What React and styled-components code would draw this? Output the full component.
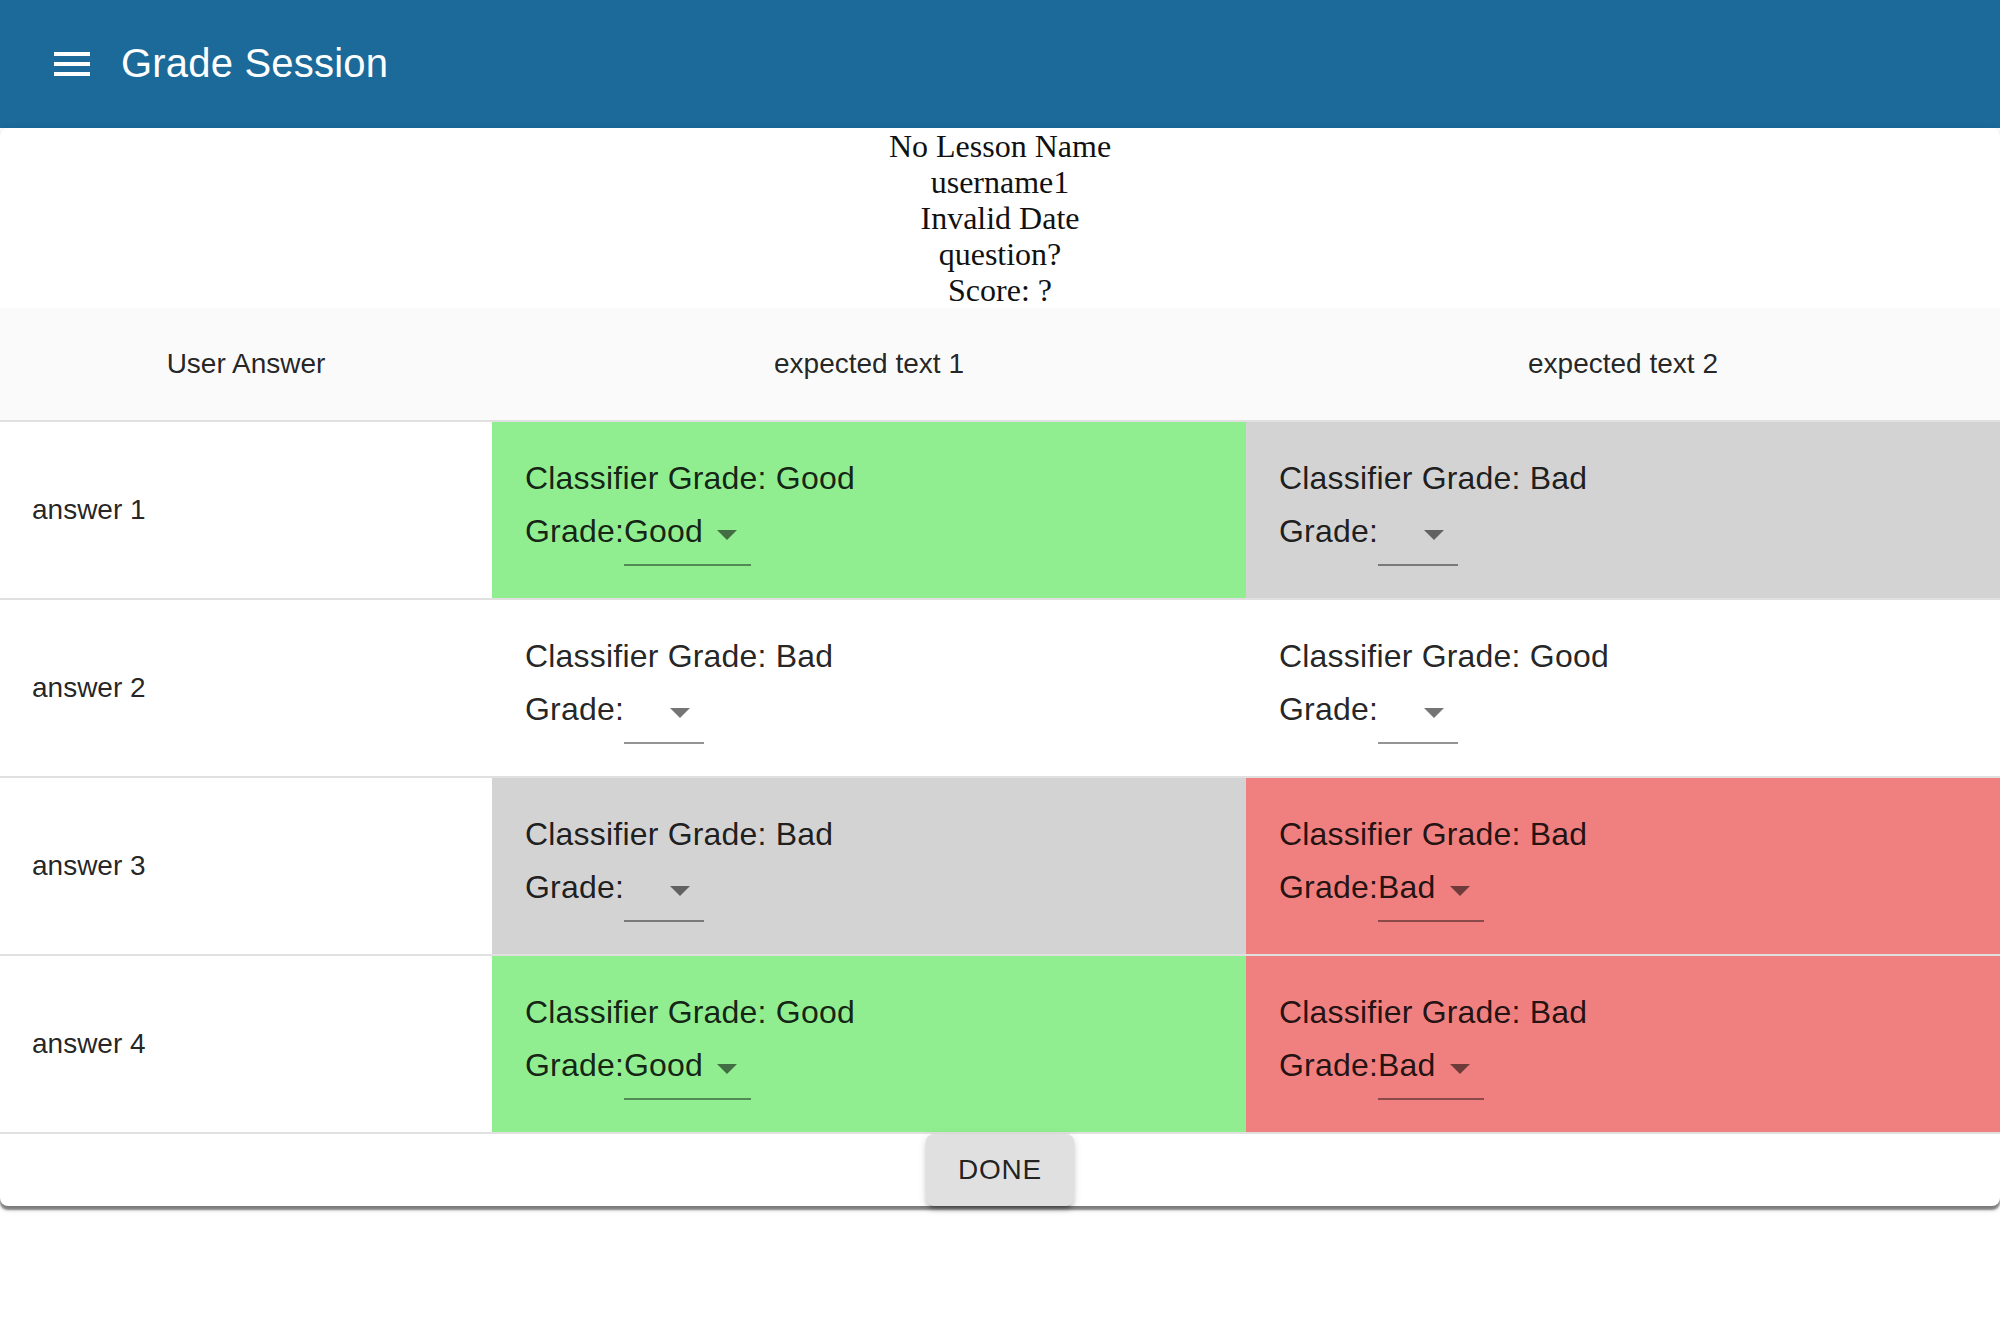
import React, { useState } from "react";
import styled, { createGlobalStyle } from "styled-components";

// global reset
const GlobalStyle = createGlobalStyle`
  body {
    margin: 0;
    background: #fff;
    font-family: "Liberation Sans", Arial, Helvetica, sans-serif;
  }
`;

const GRADE_BG = {
  Good: "#90ee90",
  Bad: "#f08080",
  none: "#d3d3d3",
  blank: "transparent",
};

// styled component
const AppBar = styled.header`
  height: 128px;
  background-color: #1b6a9a;
  color: #fff;
  display: flex;
  align-items: center;
  padding: 0 48px;
  position: relative;
  z-index: 1;
`;

const MenuButton = styled.button`
  border: none;
  background: none;
  padding: 0;
  margin-right: 25px;
  width: 48px;
  height: 48px;
  display: flex;
  color: #fff;
  cursor: pointer;

  svg {
    width: 48px;
    height: 48px;
    fill: currentColor;
  }
`;

const Title = styled.h1`
  margin: 0 0 2px;
  font-size: 40px;
  font-weight: 400;
  line-height: 1.6;
  letter-spacing: 0.2px;
`;

const Paper = styled.main`
  position: relative;
  z-index: 2;
  background: #fff;
  border-radius: 8px;
  margin-bottom: 40px;
  box-shadow: 0 4px 2px 0 rgba(0, 0, 0, 0.4), 0 3px 4px 0 rgba(0, 0, 0, 0.16),
    0 2px 8px 0 rgba(0, 0, 0, 0.12);
`;

const SessionInfo = styled.div`
  text-align: center;
  font-family: "Liberation Serif", "Times New Roman", serif;
  font-size: 32px;
  line-height: 36px;
  color: #111;
`;

const Table = styled.div`
  display: grid;
  grid-template-columns: 492px 754px 1fr;
`;

const HeadCell = styled.div`
  height: 112px;
  background-color: #fafafa;
  border-bottom: 2px solid #e0e0e0;
  display: flex;
  align-items: center;
  justify-content: center;
  font-size: 28px;
  color: rgba(0, 0, 0, 0.87);
`;

const AnswerCell = styled.div`
  height: 176px;
  border-bottom: 2px solid #e0e0e0;
  display: flex;
  align-items: center;
  padding-left: 32px;
  font-size: 28px;
  color: rgba(0, 0, 0, 0.87);
`;

const GradeCell = styled.div`
  height: 176px;
  border-bottom: 2px solid #e0e0e0;
  background-color: ${(p) => GRADE_BG[p.$tone]};
  display: flex;
  flex-direction: column;
  justify-content: center;
  padding: 0 33px;
  font-size: 32px;
  letter-spacing: 0.2px;
  color: rgba(0, 0, 0, 0.87);
`;

const ClassifierLine = styled.div`
  line-height: 48px;
`;

const GradeLine = styled.div`
  display: flex;
  align-items: flex-end;
`;

const GradeLabel = styled.span`
  line-height: 38px;
  padding-bottom: 16px;
`;

const SelectBox = styled.div`
  position: relative;
  display: inline-flex;
  padding: 10px 48px 16px 0;
  cursor: pointer;

  &::after {
    content: "";
    position: absolute;
    left: 0;
    right: 0;
    bottom: 0;
    height: 2px;
    background-color: rgba(0, 0, 0, 0.42);
  }

  svg {
    position: absolute;
    right: 0;
    top: calc(50% - 24px);
    width: 48px;
    height: 48px;
    fill: rgba(0, 0, 0, 0.54);
  }
`;

const SelectValue = styled.span`
  display: block;
  min-width: 32px;
  height: 38px;
  line-height: 38px;
`;

const Footer = styled.div`
  display: flex;
  justify-content: center;
`;

const DoneButton = styled.button`
  font-family: "Liberation Sans", Arial, Helvetica, sans-serif;
  font-size: 28px;
  line-height: 48px;
  letter-spacing: 0.8px;
  text-transform: uppercase;
  color: rgba(0, 0, 0, 0.87);
  background-color: #e0e0e0;
  border: none;
  border-radius: 8px;
  padding: 12px 32px;
  min-width: 128px;
  cursor: pointer;
  box-shadow: 0 6px 2px -4px rgba(0, 0, 0, 0.2), 0 4px 4px 0 rgba(0, 0, 0, 0.14),
    0 2px 10px 0 rgba(0, 0, 0, 0.12);
`;

const answers = [
  {
    text: "answer 1",
    grades: [
      { classifier: "Good", grade: "Good" },
      { classifier: "Bad", grade: "" },
    ],
  },
  {
    text: "answer 2",
    grades: [
      { classifier: "Bad", grade: "", blank: true },
      { classifier: "Good", grade: "", blank: true },
    ],
  },
  {
    text: "answer 3",
    grades: [
      { classifier: "Bad", grade: "" },
      { classifier: "Bad", grade: "Bad" },
    ],
  },
  {
    text: "answer 4",
    grades: [
      { classifier: "Good", grade: "Good" },
      { classifier: "Bad", grade: "Bad" },
    ],
  },
];

const MenuIcon = () => (
  <svg viewBox="0 0 24 24">
    <path d="M3 18h18v-2H3v2zm0-5h18v-2H3v2zm0-7v2h18V6H3z" />
  </svg>
);

const ArrowDropDown = () => (
  <svg viewBox="0 0 24 24">
    <path d="M7 10l5 5 5-5z" />
  </svg>
);

const GradeSelect = ({ value }) => (
  <SelectBox>
    <SelectValue>{value}</SelectValue>
    <ArrowDropDown />
  </SelectBox>
);

const App = () => {
  const [rows] = useState(answers);

  return (
    <>
      <GlobalStyle />
      <AppBar>
        <MenuButton aria-label="menu">
          <MenuIcon />
        </MenuButton>
        <Title>Grade Session</Title>
      </AppBar>
      <Paper>
        <SessionInfo>
          <div>No Lesson Name</div>
          <div>username1</div>
          <div>Invalid Date</div>
          <div>question?</div>
          <div>Score: ?</div>
        </SessionInfo>
        <Table>
          <HeadCell>User Answer</HeadCell>
          <HeadCell>expected text 1</HeadCell>
          <HeadCell>expected text 2</HeadCell>
          {rows.map((row) => (
            <React.Fragment key={row.text}>
              <AnswerCell>{row.text}</AnswerCell>
              {row.grades.map((g, i) => (
                <GradeCell
                  key={i}
                  $tone={g.blank ? "blank" : g.grade || "none"}
                >
                  <ClassifierLine>Classifier Grade: {g.classifier}</ClassifierLine>
                  <GradeLine>
                    <GradeLabel>Grade:</GradeLabel>
                    <GradeSelect value={g.grade} />
                  </GradeLine>
                </GradeCell>
              ))}
            </React.Fragment>
          ))}
        </Table>
        <Footer>
          <DoneButton>Done</DoneButton>
        </Footer>
      </Paper>
    </>
  );
};

export default App;
